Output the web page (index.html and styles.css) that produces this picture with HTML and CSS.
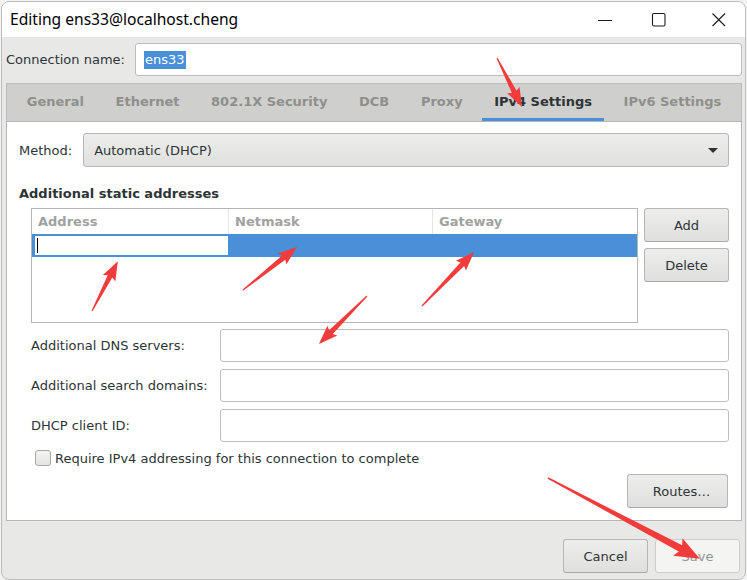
FILE: index.html
```html
<!DOCTYPE html>
<html>
<head>
<meta charset="utf-8">
<link rel="stylesheet" href="styles.css">
</head>
<body>
<div class="window">
  <div class="titlebar">
    <div class="title">Editing ens33@localhost.cheng</div>
    <div class="controls">
      <span class="ctl ctl-min"><svg width="16" height="16" viewBox="0 0 16 16"><path d="M1 8.5H15" stroke="#1a1a1a" stroke-width="1.1"/></svg></span>
      <span class="ctl ctl-max"><svg width="16" height="16" viewBox="0 0 16 16"><rect x="1.5" y="1.5" width="12.5" height="12.5" rx="1.5" fill="none" stroke="#1a1a1a" stroke-width="1.1"/></svg></span>
      <span class="ctl ctl-close"><svg width="16" height="16" viewBox="0 0 16 16"><path d="M1.5 1.5L14 14M14 1.5L1.5 14" stroke="#1a1a1a" stroke-width="1.1"/></svg></span>
    </div>
  </div>
  <div class="content">
    <div class="name-row">
      <span class="label">Connection name:</span>
      <div class="entry name-entry"><span class="sel">ens33</span></div>
    </div>
    <div class="notebook">
      <div class="tabs">
        <span class="tab">General</span>
        <span class="tab">Ethernet</span>
        <span class="tab">802.1X Security</span>
        <span class="tab">DCB</span>
        <span class="tab">Proxy</span>
        <span class="tab active">IPv4 Settings</span>
        <span class="tab">IPv6 Settings</span>
      </div>
      <div class="page">
        <div class="method-row">
          <span class="label">Method:</span>
          <div class="combo"><span>Automatic (DHCP)</span><span class="caret"></span></div>
        </div>
        <div class="section-title">Additional static addresses</div>
        <div class="addr-row">
          <div class="tree">
            <div class="tree-head">
              <span class="col c1">Address</span>
              <span class="col c2">Netmask</span>
              <span class="col c3">Gateway</span>
            </div>
            <div class="tree-sel">
              <div class="cell-entry"><span class="cursor"></span></div>
            </div>
          </div>
          <div class="side-buttons">
            <button class="btn">Add</button>
            <button class="btn">Delete</button>
          </div>
        </div>
        <div class="form">
          <span class="label">Additional DNS servers:</span><div class="entry"></div>
          <span class="label">Additional search domains:</span><div class="entry"></div>
          <span class="label">DHCP client ID:</span><div class="entry"></div>
        </div>
        <label class="check-row"><span class="checkbox"></span><span class="label">Require IPv4 addressing for this connection to complete</span></label>
        <div class="routes-row"><button class="btn routes">Routes…</button></div>
      </div>
    </div>
    <div class="actions">
      <button class="btn">Cancel</button>
      <button class="btn disabled">Save</button>
    </div>
  </div>
</div>
<svg class="annot" width="747" height="580" viewBox="0 0 747 580">
  <g fill="#f23c3c">
    <polygon transform="translate(497 58) rotate(63)" points="0,-0.6 38,-2.6 36,-7 55,0 36,7 38,2.6 0,0.6"/>
    <polygon transform="translate(92 311) rotate(-62.5)" points="0,-0.6 39,-2.6 37,-7 56,0 37,7 39,2.6 0,0.6"/>
    <polygon transform="translate(243 290) rotate(-38.5)" points="0,-0.6 52,-2.6 50,-7 69,0 50,7 52,2.6 0,0.6"/>
    <polygon transform="translate(422 306) rotate(-46)" points="0,-0.6 58,-2.6 56,-7 75,0 56,7 58,2.6 0,0.6"/>
    <polygon transform="translate(367 296) rotate(135)" points="0,-0.6 51,-2.6 49,-7 68,0 49,7 51,2.6 0,0.6"/>
    <polygon transform="translate(548 478) rotate(28)" points="0,-0.8 150,-3.6 147,-10 172,0 147,10 150,3.6 0,0.8"/>
  </g>
</svg>
</body>
</html>
```
FILE: styles.css
```css
html, body {
  margin: 0;
  padding: 0;
  background: #f3f3f3;
  width: 747px;
  height: 580px;
  overflow: hidden;
  position: relative;
}
.window {
  box-sizing: border-box;
  width: 745px;
  height: 579px;
  margin: 1px 0 0 1px;
  border: 1px solid #bdbdbd;
  border-radius: 8px;
  overflow: hidden;
  display: flex;
  flex-direction: column;
  background: #e8e8e7;
  font-family: "DejaVu Sans", sans-serif;
  font-size: 13px;
  color: #2e3436;
}
.titlebar {
  height: 35px;
  flex: none;
  background: #ffffff;
  display: flex;
  align-items: center;
  justify-content: space-between;
}
.title {
  font-family: "Noto Sans", sans-serif;
  font-size: 15.6px;
  color: #000;
  padding-left: 8px;
  padding-bottom: 1px;
}
.controls {
  display: flex;
  padding-right: 3px;
}
.ctl {
  width: 46px;
  height: 35px;
  display: flex;
  align-items: center;
  justify-content: center;
}
.ctl-max { margin-left: 8px; }
.ctl-close { margin-left: 14px; }
.ctl svg { display: block; }
.content {
  flex: 1;
  display: flex;
  flex-direction: column;
  padding: 6px 3px 0 4px;
}
.label {
  white-space: nowrap;
}
.name-row {
  display: flex;
  align-items: center;
  gap: 10px;
}
.entry {
  box-sizing: border-box;
  height: 33px;
  background: #fff;
  border: 1px solid #bdbdba;
  border-radius: 3px;
  display: flex;
  align-items: center;
}
.name-entry {
  flex: 1;
  padding-left: 8px;
}
.sel {
  background: #4a90d9;
  color: #fff;
  line-height: 18px;
  padding: 0 1px;
}
.notebook {
  margin-top: 7px;
  display: flex;
  flex-direction: column;
}
.tabs {
  box-sizing: border-box;
  height: 38px;
  background: #cfcfcd;
  border: 1px solid #bdbdba;
  border-bottom: none;
  display: flex;
  align-items: stretch;
  padding-left: 4px;
}
.tab {
  margin: 0 4px;
  padding: 0 11.8px;
  font-weight: bold;
  color: #8e8f8c;
  display: flex;
  align-items: center;
  padding-top: 1px;
  border-bottom: 3px solid transparent;
}
.tab.active {
  color: #2e3436;
  border-bottom-color: #4a90d9;
}
.page {
  box-sizing: border-box;
  height: 400px;
  background: #fff;
  border: 1px solid #b6b6b3;
  padding: 11px 12px 0 12px;
  display: flex;
  flex-direction: column;
}
.method-row {
  display: flex;
  align-items: center;
  gap: 11px;
}
.combo {
  flex: 1;
  box-sizing: border-box;
  height: 34px;
  border: 1px solid #b6b6b3;
  border-radius: 3px;
  background: linear-gradient(#ededeb, #e0e0de);
  display: flex;
  align-items: center;
  justify-content: space-between;
  padding: 0 10px 0 10px;
}
.caret {
  width: 0;
  height: 0;
  border-left: 5px solid transparent;
  border-right: 5px solid transparent;
  border-top: 5px solid #2e3436;
}
.section-title {
  font-weight: bold;
  margin-top: 19px;
  line-height: 16px;
}
.addr-row {
  display: flex;
  gap: 6px;
  margin-top: 6px;
  padding-left: 12px;
}
.tree {
  box-sizing: border-box;
  width: 607px;
  height: 115px;
  border: 1px solid #b6b6b3;
  background: #fff;
}
.tree-head {
  display: flex;
  height: 25px;
}
.col {
  box-sizing: border-box;
  font-weight: bold;
  color: #a1a2a0;
  padding-left: 6px;
  display: flex;
  align-items: center;
  border-right: 1px solid #e6e6e5;
}
.c1 { width: 197px; }
.c2 { width: 204px; }
.c3 { flex: 1; border-right: none; }
.tree-sel {
  height: 23px;
  background: #4a90d9;
  display: flex;
  align-items: center;
  padding-left: 3px;
}
.cell-entry {
  width: 191px;
  height: 19px;
  background: #fff;
  display: flex;
  align-items: center;
  padding-left: 2px;
}
.cursor {
  width: 1px;
  height: 15px;
  background: #000;
}
.side-buttons {
  display: flex;
  flex-direction: column;
  gap: 6px;
}
.btn {
  box-sizing: border-box;
  width: 85px;
  height: 34px;
  border: 1px solid #b6b6b3;
  border-bottom-color: #a8a8a5;
  border-radius: 3px;
  background: linear-gradient(#ededeb, #dfdfdd);
  font-family: "DejaVu Sans", sans-serif;
  font-size: 13px;
  color: #2e3436;
  padding: 0;
}
.btn.disabled {
  background: #f4f4f3;
  border-color: #cdcdca;
  color: #929595;
}
.form {
  display: grid;
  grid-template-columns: 189px 1fr;
  row-gap: 7px;
  align-items: center;
  margin-top: 6px;
  padding-left: 12px;
}
.check-row {
  display: flex;
  align-items: center;
  gap: 4px;
  margin-top: 8px;
  padding-left: 16px;
}
.checkbox {
  box-sizing: border-box;
  width: 16px;
  height: 16px;
  border: 1px solid #a8a8a5;
  border-radius: 3px;
  background: linear-gradient(#f4f4f3, #e4e4e2);
}
.routes-row {
  display: flex;
  justify-content: flex-end;
  margin-top: 8px;
  padding-right: 1px;
}
.btn.routes {
  width: 101px;
  padding-left: 8px;
}
.actions {
  flex: 1;
  display: flex;
  justify-content: flex-end;
  align-items: center;
  gap: 7px;
  padding-right: 2px;
  padding-top: 12px;
}
.annot {
  position: absolute;
  left: 0;
  top: 0;
  pointer-events: none;
}
```
